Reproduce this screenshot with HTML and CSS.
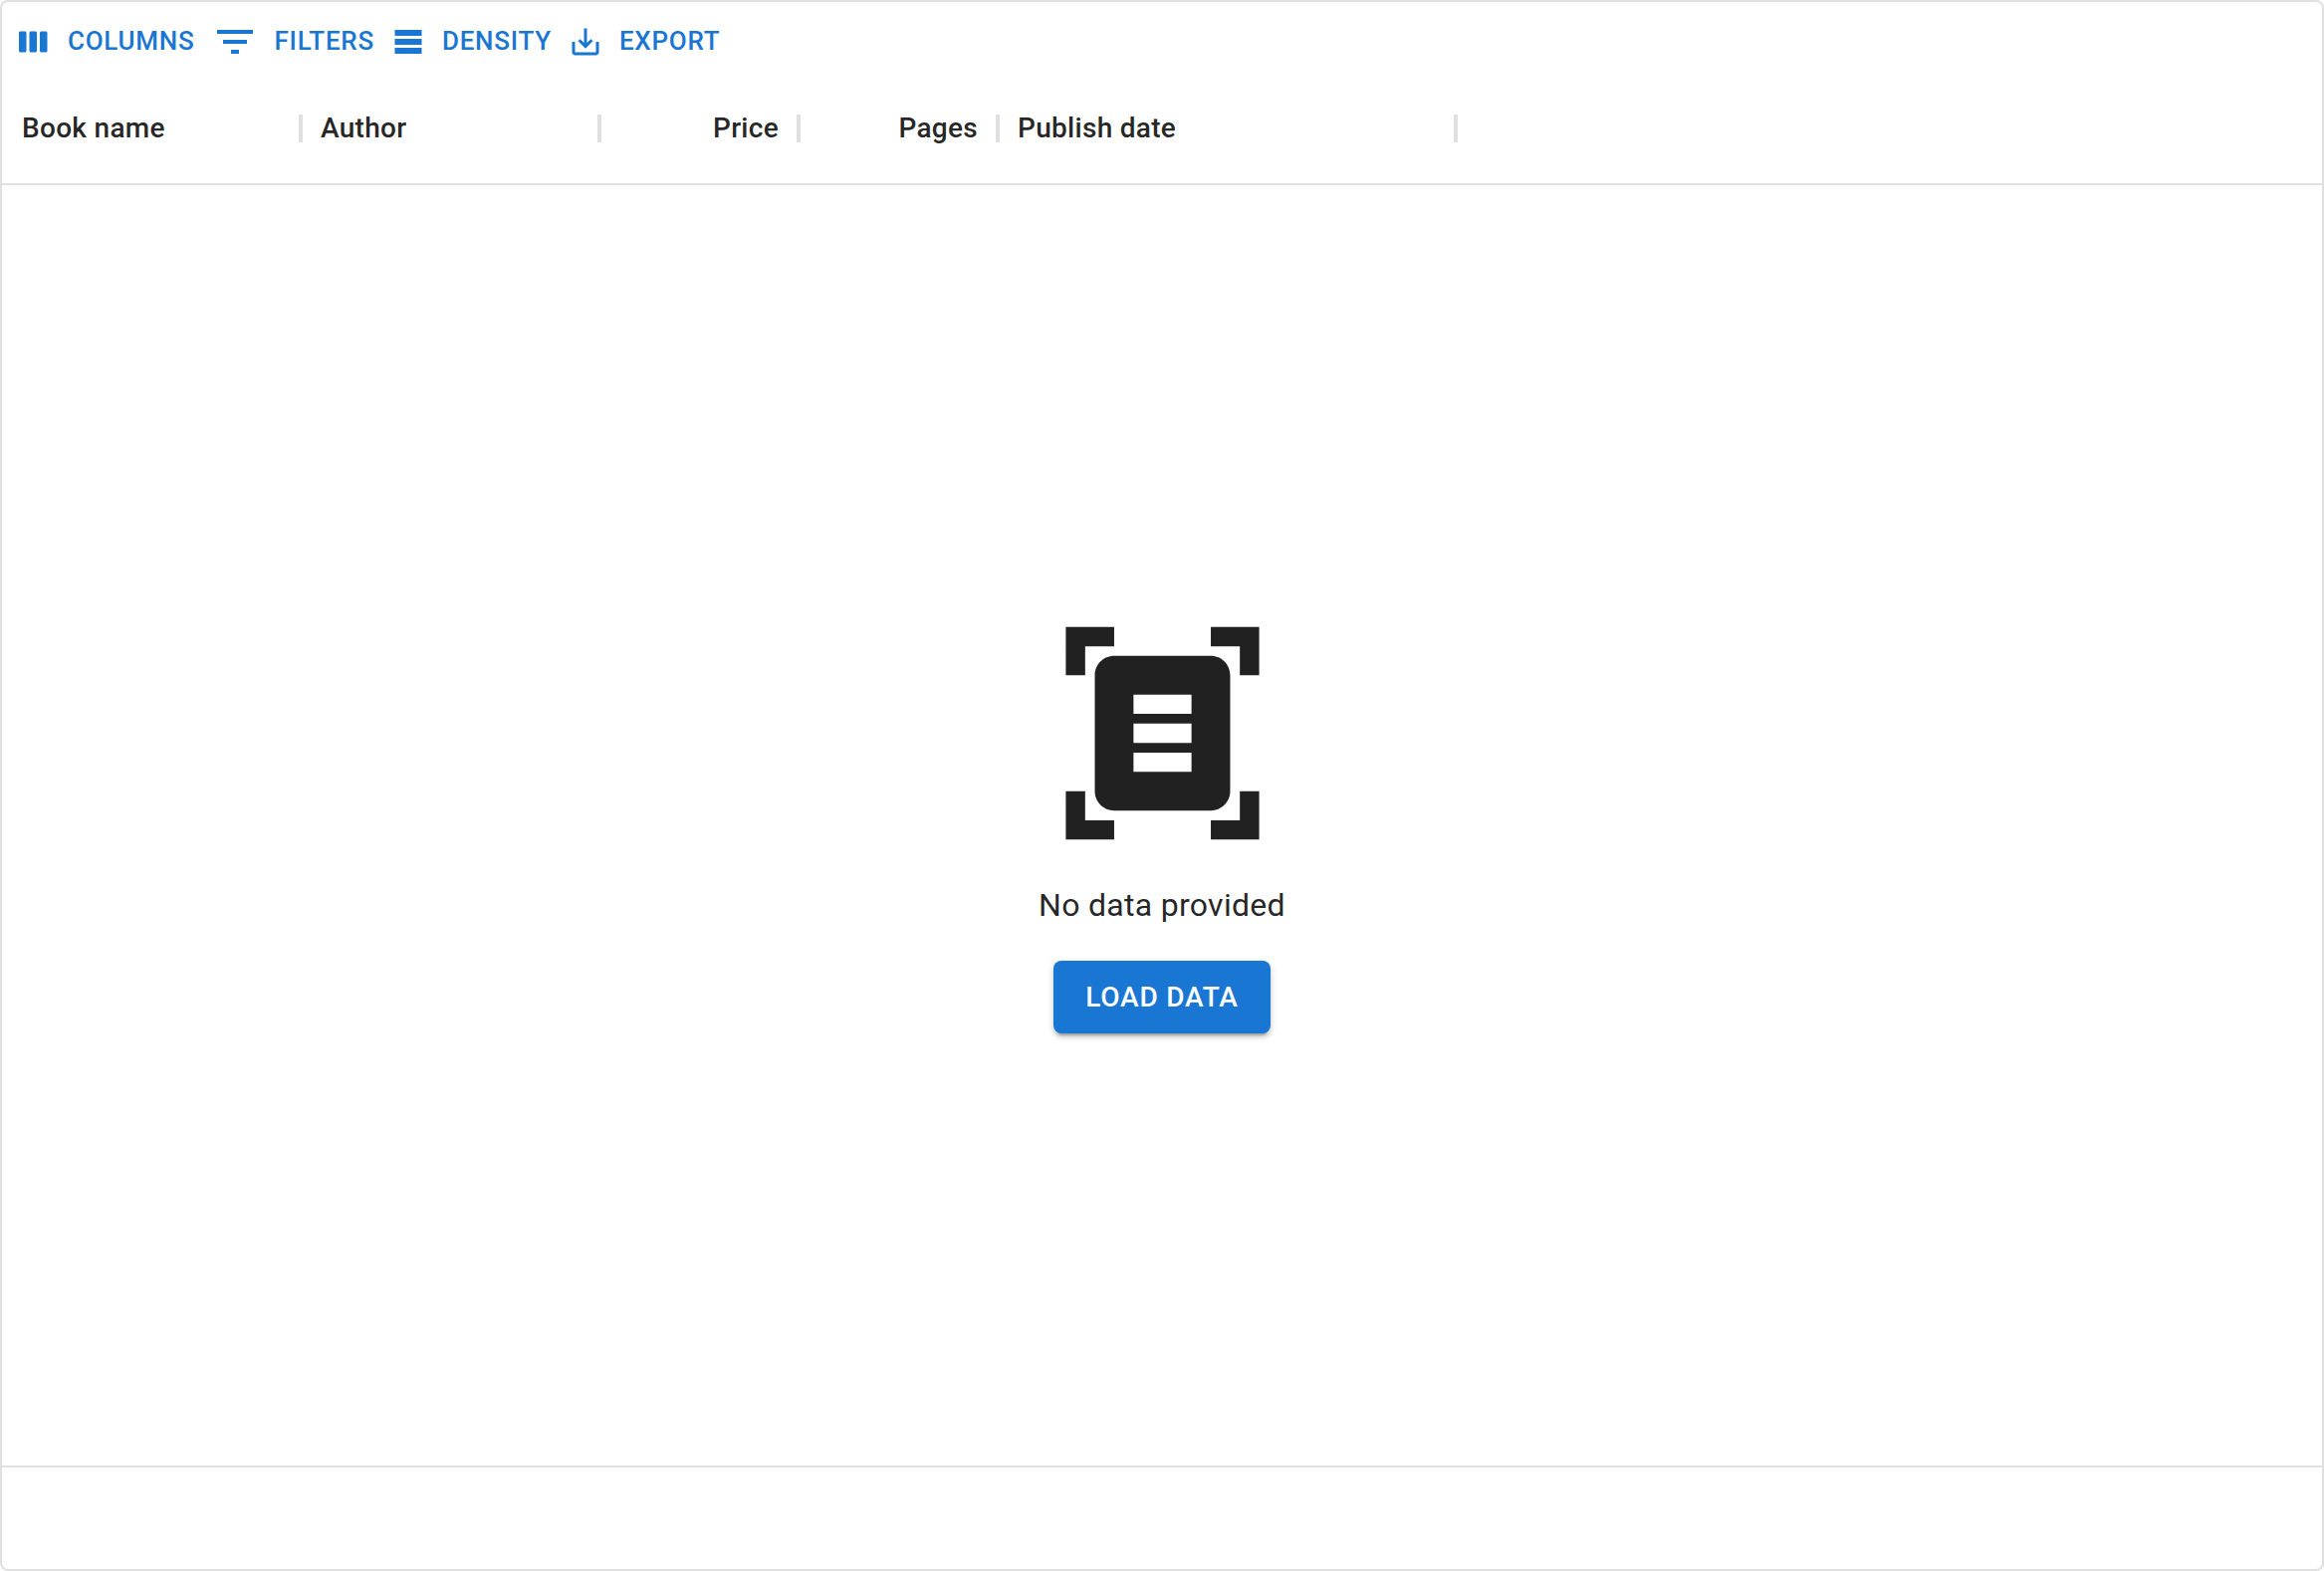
FILE: index.html
```html
<!DOCTYPE html>
<html lang="en">
<head>
<meta charset="utf-8">
<title>Books</title>
<link rel="stylesheet" href="styles.css">
</head>
<body>
<main class="grid">
  <div class="toolbar">
    <button class="tool"><svg class="icon" viewBox="0 0 24 24"><path d="M6 5H3c-.55 0-1 .45-1 1v12c0 .55.45 1 1 1h3c.55 0 1-.45 1-1V6c0-.55-.45-1-1-1zm14 0h-3c-.55 0-1 .45-1 1v12c0 .55.45 1 1 1h3c.55 0 1-.45 1-1V6c0-.55-.45-1-1-1zm-7 0h-3c-.55 0-1 .45-1 1v12c0 .55.45 1 1 1h3c.55 0 1-.45 1-1V6c0-.55-.45-1-1-1z"/></svg>Columns</button>
    <button class="tool"><svg class="icon icon-large" viewBox="0 0 24 24"><path d="M10 18h4v-2h-4v2zM3 6v2h18V6H3zm3 7h12v-2H6v2z"/></svg>Filters</button>
    <button class="tool"><svg class="icon" viewBox="0 0 24 24"><path d="M21 8H3V4h18v4zm0 2H3v4h18v-4zm0 6H3v4h18v-4z"/></svg>Density</button>
    <button class="tool"><svg class="icon" viewBox="0 0 24 24"><path d="M19 12v7H5v-7H3v7c0 1.1.9 2 2 2h14c1.1 0 2-.9 2-2v-7h-2zm-6 .67l2.59-2.58L17 11.5l-5 5-5-5 1.41-1.41L11 12.67V3h2z"/></svg>Export</button>
  </div>
  <div class="headers">
    <div class="header">Book name</div>
    <div class="header">Author</div>
    <div class="header header-number">Price</div>
    <div class="header header-number">Pages</div>
    <div class="header header-date">Publish date</div>
  </div>
  <div class="empty">
    <svg class="empty-icon" viewBox="0 0 24 24"><path d="M7 3H4v3H2V1h5v2zm15 3V1h-5v2h3v3h2zM7 21H4v-3H2v5h5v-2zm13-3v3h-3v2h5v-5h-2zm-1 0c0 1.1-.9 2-2 2H7c-1.1 0-2-.9-2-2V6c0-1.1.9-2 2-2h10c1.1 0 2 .9 2 2v12zM15 8H9v2h6V8zm0 3H9v2h6v-2zm0 3H9v2h6v-2z"/></svg>
    <p class="empty-text">No data provided</p>
    <button class="load">Load data</button>
  </div>
  <footer class="footer"></footer>
</main>
</body>
</html>
```

FILE: styles.css
```css
* {
  box-sizing: border-box;
}

body {
  margin: 0;
  background: #fff;
  color: rgba(0, 0, 0, 0.87);
  font-family: Roboto, "Liberation Sans", sans-serif;
  -webkit-font-smoothing: antialiased;
}

button {
  border: 0;
  margin: 0;
  font-family: inherit;
  font-weight: 500;
  line-height: 1.75;
  letter-spacing: 0.02857em;
  text-transform: uppercase;
  white-space: nowrap;
}

.grid {
  display: flex;
  flex-direction: column;
  height: 100vh;
  border: 2px solid #e0e0e0;
  border-radius: 8px;
}

.toolbar {
  display: flex;
  padding: 8px 8px 0;
}

.tool {
  display: flex;
  align-items: center;
  padding: 8px 10px;
  background: none;
  color: #1976d2;
  font-size: 26px;
}

.icon {
  flex: none;
  width: 36px;
  height: 36px;
  margin: 0 16px 0 -4px;
  fill: currentColor;
}

.icon-large {
  width: 48px;
  height: 48px;
}

.headers {
  display: flex;
  height: 112px;
  border-bottom: 2px solid #e0e0e0;
}

.header {
  position: relative;
  display: flex;
  align-items: center;
  width: 300px;
  padding: 0 20px 2px;
  font-size: 28px;
  font-weight: 500;
  letter-spacing: 0.01071em;
}

/* resize handle straddling the column edge */
.header::after {
  content: "";
  position: absolute;
  top: 41px;
  right: -2px;
  width: 4px;
  height: 28px;
  background: #e0e0e0;
}

.header-number {
  width: 200px;
  justify-content: flex-end;
}

.header-date {
  width: 460px;
}

.empty {
  flex: 1;
  display: flex;
  flex-direction: column;
  align-items: center;
  justify-content: center;
  gap: 32px;
}

.empty-icon {
  width: 233px;
  height: 233px;
  margin-left: 1px;
  fill: #212121;
}

.empty-text {
  margin: 0;
  font-size: 32px;
  line-height: 1.5;
  letter-spacing: 0.00938em;
}

.load {
  padding: 12px 32px;
  border-radius: 8px;
  background: #1976d2;
  color: #fff;
  font-size: 28px;
  box-shadow: 0 6px 2px -4px rgba(0, 0, 0, 0.2), 0 4px 4px 0 rgba(0, 0, 0, 0.14), 0 2px 10px 0 rgba(0, 0, 0, 0.12);
}

.footer {
  height: 104px;
  border-top: 2px solid #e0e0e0;
}
```
